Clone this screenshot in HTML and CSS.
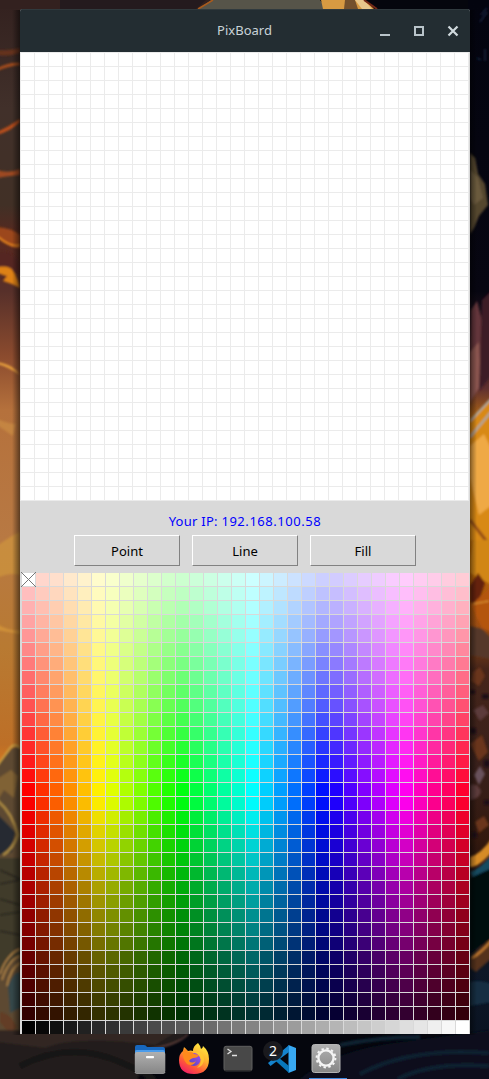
FILE: index.html
```html
<!DOCTYPE html>
<html lang="en">
<head>
<meta charset="utf-8">
<title>PixBoard</title>
<link rel="stylesheet" href="styles.css">
</head>
<body>
<div class="desktop">
  <svg class="wallpaper" viewBox="0 0 489 1079" width="489" height="1079" aria-hidden="true">
    <defs>
      <linearGradient id="left" x1="0" y1="0" x2="0" y2="1">
        <stop offset="0" stop-color="#33211f"/><stop offset=".1" stop-color="#41302a"/>
        <stop offset=".19" stop-color="#413026"/><stop offset=".22" stop-color="#58281f"/>
        <stop offset=".27" stop-color="#57302a"/><stop offset=".33" stop-color="#8b4b2e"/>
        <stop offset=".38" stop-color="#b5713c"/><stop offset=".5" stop-color="#b87943"/>
        <stop offset=".6" stop-color="#b87a32"/><stop offset=".69" stop-color="#bd6f27"/>
        <stop offset=".71" stop-color="#d57920"/><stop offset=".74" stop-color="#9c6b2f"/>
        <stop offset=".8" stop-color="#665337"/><stop offset=".87" stop-color="#393329"/>
        <stop offset=".96" stop-color="#27221e"/><stop offset="1" stop-color="#28211f"/>
      </linearGradient>
      <linearGradient id="right" x1="0" y1="0" x2="0" y2="1">
        <stop offset="0" stop-color="#03040f"/><stop offset=".27" stop-color="#070611"/>
        <stop offset=".31" stop-color="#2d1820"/><stop offset=".36" stop-color="#5f302f"/>
        <stop offset=".39" stop-color="#b86b10"/><stop offset=".47" stop-color="#e6982c"/>
        <stop offset=".51" stop-color="#bd6907"/><stop offset=".58" stop-color="#9c4d12"/>
        <stop offset=".62" stop-color="#46251a"/><stop offset=".71" stop-color="#39201b"/>
        <stop offset=".78" stop-color="#32180e"/><stop offset=".85" stop-color="#090b12"/>
        <stop offset=".9" stop-color="#0e1727"/><stop offset="1" stop-color="#07111e"/>
      </linearGradient>
      <linearGradient id="edge-l"><stop offset="0" stop-color="#000" stop-opacity="0"/><stop offset="1" stop-color="#000" stop-opacity=".5"/></linearGradient>
      <linearGradient id="edge-r"><stop offset="0" stop-color="#000" stop-opacity=".45"/><stop offset="1" stop-color="#000" stop-opacity="0"/></linearGradient>
      <filter id="soft" filterUnits="userSpaceOnUse" x="-5" y="-5" width="499" height="1089"><feGaussianBlur stdDeviation=".8"/></filter>
    </defs>
    <rect width="489" height="1079" fill="#05060d"/>
    <rect width="22" height="1079" fill="url(#left)"/>
    <rect x="468" width="21" height="1079" fill="url(#right)"/>
    <!-- top strip -->
    <path d="M0 0H211L198 9H0Z" fill="#33211f"/>
    <path d="M60 0H206L196 9H60Z" fill="#241a1e"/>
    <path d="M211 0H320L328 9H198Z" fill="#565449"/>
    <path d="M213 0l-15 9" stroke="#a95a1c" stroke-width="1.5"/>
    <path d="M321 0h44l9 9h-51z" fill="#d79a42"/>
    <path d="M345 0h10l3 9h-14z" fill="#73502c"/>
    <path d="M355 0h9l8 9h-10z" fill="#e8c78b"/>
    <path d="M364 0l13 9" stroke="#732817" stroke-width="2"/>
    <g filter="url(#soft)">
      <!-- clouds on the left -->
      <path d="M-3 50Q8 51 20 48V53Q8 57 -3 55Z" fill="#65301e"/>
      <path d="M-3 68Q10 62 20 63V65Q9 66 -3 71Z" fill="#a24c1d"/>
      <path d="M-3 132Q10 126 20 119V122Q11 131 -3 135Z" fill="#b84e1d"/>
      <path d="M-3 170Q9 174 20 169V175Q8 176 -3 178Z" fill="#9d4920"/>
      <path d="M-3 227Q12 228 20 235V248Q11 250 -3 236Z" fill="#9c471d"/>
      <path d="M-2 237Q11 248 20 245" fill="none" stroke="#e7851b" stroke-width="2"/>
      <path d="M-3 252Q10 248 20 263V272L4 282L2 275L-3 271Z" fill="#542622"/>
      <path d="M-3 267Q10 265 13 271Q18 278 20 288L12 284L3 281L7 276L-3 273Z" fill="#dd8119"/>
      <path d="M-3 364Q9 367 20 375L16 370Q9 364 -3 362Z" fill="#eba33d"/>
      <path d="M-3 419Q9 424 16 424L13 436Q7 432 -3 425Z" fill="#d39845" opacity=".5"/>
      <path d="M-3 546Q12 535 20 532V575Q10 572 -3 578Z" fill="#d49b3b" opacity=".6"/>
      <path d="M-3 624Q10 632 20 630V634L-3 630Z" fill="#e0a03c" opacity=".6"/>
      <!-- rocks on the left -->
      <path d="M-3 766L12 748L20 746V1034H-3Z" fill="#5d4a31"/>
      <path d="M-3 766L10 748Q15 742 20 748" fill="none" stroke="#c9a044" stroke-width="1.8"/>
      <path d="M-3 814Q9 825 15 832L12 852L-3 855Z" fill="#252b31"/>
      <path d="M-3 779L11 770L18 776L14 798L4 790L-3 801Z" fill="#806234"/>
      <path d="M-3 800Q13 814 18 835Q13 849 3 855" fill="none" stroke="#a98843" stroke-width="2.400"/>
      <path d="M-3 858H20V955L-3 975Z" fill="#403a2b"/>
      <path d="M0 870l20 9M0 884l20 -4M0 899l20 6M0 915l20 -3M0 931l20 4" stroke="#25251f" stroke-width="1.5"/>
      <path d="M0 974Q7 954 20 949M2 980Q8 960 20 956M7 986Q10 969 20 963" fill="none" stroke="#b08347" stroke-width="1.6"/>
      <path d="M8 986Q15 970 20 973V1008L10 1013Z" fill="#35474a"/>
      <path d="M0 1012Q10 1013 17 1027L10 1034L0 1022Z" fill="#633c27"/>
      <!-- right side -->
      <path d="M481 15l6-7M480 22l7-10M477 58l4 2M485 49v12" stroke="#18243d" stroke-width="1.5" fill="none"/>
      <path d="M470 153L475 158L478 174L485 184L488 205L479 216L474 228L470 234Z" fill="#55462f"/>
      <path d="M470 170l8 8 5 20-9 7-4-7z" fill="#6a5a3e"/>
      <path d="M471 310l6-9 5 20v39l-12 45z" fill="#63363a"/>
      <path d="M470 352l9-10 2 43-11 17z" fill="#8a5550"/>
      <path d="M482 300l10-10v85l-13 16z" fill="#3d1d26"/>
      <path d="M470 421L492 399V540H470Z" fill="#d88914"/>
      <path d="M470 421L491 399M470 437L491 412" stroke="#aaa9a0" stroke-width="2"/>
      <path d="M470 446L484 434L492 450V505L479 515L470 478Z" fill="#efa945"/>
      <path d="M470 520l21 27" stroke="#975018" stroke-width="3"/>
      <path d="M473 540H492V585L470 573V559Z" fill="#d18613"/>
      <path d="M470 586L478 573L485 583L476 609L470 601Z" fill="#652008"/>
      <path d="M471 605L492 586V632L482 628Z" fill="#b4540f"/>
      <path d="M473 604l16-3" stroke="#e5a33c"/>
      <path d="M470 626l12 3 10 10v20l-22-4z" fill="#54382a"/>
      <path d="M473 672l7-5 5 9-6 10-8-5zM470 744l12-9 6 17-9 9zM475 822l9-6 5 9-10 8z" fill="#6b361a"/>
      <path d="M474 775l6-9 5 8-6 11z" fill="#69515b"/>
      <path d="M470 785q8-2 11 6 0 7-11 9zM473 710l10-5 6 8-9 8z" fill="#5c3b3b"/>
      <path d="M470 690h5v4h-5zM482 694h7v5h-7zM470 728h6v6h-6zM484 760h6v7h-6zM472 832h5v6h-5zM484 800h6v5h-6z" fill="#1b1114"/>
      <path d="M470 857Q481 854 492 838V852Q478 868 470 867Z" fill="#d68b25"/>
      <path d="M470 872Q480 869 492 854V872L476 884Z" fill="#174b61"/>
      <path d="M470 878L492 868V938Q478 948 470 953Z" fill="#05070c"/>
      <path d="M470 957Q480 947 492 938V958L476 972L470 968Z" fill="#54331f"/>
      <path d="M472 958Q482 952 491 941" fill="none" stroke="#c47c32" stroke-width="2"/>
      <path d="M470 982Q480 979 492 984V1002L470 1006Z" fill="#122e43"/>
      <!-- bottom strip -->
      <path d="M-3 1030H188Q176 1046 157 1049Q145 1052 137 1083H-3Z" fill="#211b1a"/>
      <path d="M-3 1030H180L155 1045Q75 1035 45 1048L-3 1042Z" fill="#302522"/>
      <path d="M188 1034Q178 1045 151 1049" fill="none" stroke="#63433e" stroke-width="1.5"/>
      <path d="M20 1066Q70 1040 120 1062T145 1079" fill="none" stroke="#171517" stroke-width="6"/>
      <path d="M295 1083Q330 1050 400 1042L492 1030V1083Z" fill="#07101c"/>
      <path d="M360 1074Q410 1047 489 1053M398 1079Q430 1062 489 1066M340 1045Q380 1037 420 1037" fill="none" stroke="#0d2131" stroke-width="4"/>
    </g>
    <rect x="12" y="10" width="8" height="1025" fill="url(#edge-l)"/>
    <rect x="470" y="10" width="7" height="1025" fill="url(#edge-r)"/>
  </svg>

  <main class="window">
    <header class="titlebar">
      <h1 class="title">PixBoard</h1>
      <svg class="controls" width="80" height="12" viewBox="0 0 80 12">
        <path d="M0 9h10v2H0z" fill="#b9c4ca"/>
        <path d="M35 2h8v8h-8z" fill="none" stroke="#b9c4ca" stroke-width="2"/>
        <path d="M68.500 1.500l9 9M77.500 1.500l-9 9" stroke="#d0dade" stroke-width="2.200"/>
      </svg>
    </header>
    <div class="board"></div>
    <section class="panel">
      <p class="address">Your IP: <span class="digits">192.168.100.58</span></p>
      <div class="tools">
        <button class="tool">Point</button>
        <button class="tool">Line</button>
        <button class="tool">Fill</button>
      </div>
    </section>
    <div class="palette" id="palette"></div>
  </main>

  <nav class="dock">
    <svg class="app" width="32" height="32" viewBox="0 0 32 32">
      <defs><linearGradient id="metal" x1="0" y1="0" x2="0" y2="1"><stop offset="0" stop-color="#b0b0b0"/><stop offset="1" stop-color="#878787"/></linearGradient></defs>
      <path d="M1 11V4q0-2 2-2h7q2 0 3 2h16q2 0 2 2v5z" fill="#1767bd"/>
      <path d="M1 10V8q0-1 2-1h26q2 0 2 2v3H1z" fill="#4b9ceb"/>
      <rect x=".8" y="9" width="30.500" height="21" rx="2" fill="url(#metal)"/>
      <path d="M1 29q0 1.500 2 1.500h26q2 0 2-1.500" fill="none" stroke="#c8c8c8" stroke-width=".7"/>
      <rect x="12" y="13" width="8" height="2.200" rx=".7" fill="#fff"/>
    </svg>
    <svg class="app" width="32" height="32" viewBox="0 0 32 32">
      <defs>
        <linearGradient id="flame" x1=".8" y1="0" x2=".2" y2="1"><stop offset="0" stop-color="#fff044"/><stop offset=".4" stop-color="#ffb02e"/><stop offset=".7" stop-color="#ff5a37"/><stop offset="1" stop-color="#ef1969"/></linearGradient>
        <linearGradient id="globe" x1="1" y1="0" x2="0" y2="1"><stop offset="0" stop-color="#a54cf0"/><stop offset="1" stop-color="#4b49b5"/></linearGradient>
      </defs>
      <path d="M20 0q2 2 3 6 2-1 2-3 6 5 6 13 0 15-15 15T1 17Q1 11 5 8l1-4 4 4q3-1 5 0 0-5 5-8z" fill="url(#flame)"/>
      <circle cx="16" cy="16.500" r="6.500" fill="url(#globe)"/>
      <path d="M5 8l2-3 3 4q4-1 6 2l5 1q-1 3-6 3-3 1-4 3 3 3 7 0-3 6-9 3-5-5-4-13z" fill="#ff8a1c"/>
      <path d="M17 9q8-2 9 7 0 7-7 9 6-6 3-11-2-3-5-5z" fill="#ffca32" opacity=".8"/>
    </svg>
    <svg class="app" width="32" height="32" viewBox="0 0 32 32">
      <rect x="2" y="3.300" width="28" height="24.500" rx="2" fill="#484848" stroke="#606060"/>
      <path d="M2.500 27.800h27" stroke="#222"/>
      <path d="M5.500 6l3.500 2.500L5.500 11M10 12.500h5" fill="none" stroke="#e0e0e0" stroke-width="1.300"/>
    </svg>
    <div class="app badged">
      <svg width="32" height="32" viewBox="0 0 32 32">
        <path d="M22.500 2L30 5v22l-7.500 3z" fill="#38a8f2"/>
        <path d="M23 2L2 20l2.500 3L23 9z" fill="#1583cd"/>
        <path d="M2 11l2.500-3L23 23v7z" fill="#0877ba"/>
      </svg>
      <span class="badge">2</span>
    </div>
    <svg class="app" width="32" height="32" viewBox="0 0 32 32">
      <rect x="2" y="1.500" width="28" height="28" rx="2.500" fill="url(#metal)" stroke="#b4b4b4"/>
      <circle cx="16" cy="15" r="7.600" fill="none" stroke="#f4f4f4" stroke-width="2.400"/>
      <circle cx="16" cy="15" r="9.400" fill="none" stroke="#f4f4f4" stroke-width="2" stroke-dasharray="2.400 2.522"/>
    </svg>
    <span class="running"></span>
  </nav>
</div>
<script src="palette.js"></script>
</body>
</html>
```

FILE: styles.css
```css
* { box-sizing: border-box; }

body {
  margin: 0;
  font-family: "Noto Sans", sans-serif;
}

.desktop {
  position: relative;
  width: 489px;
  height: 1079px;
  padding: 9px 19px 0 20px;
  overflow: hidden;
}

.wallpaper {
  position: absolute;
  inset: 0;
}

.window {
  position: relative;
  width: 450px;
  height: 1025px;
  background: #d9d9d9;
  border-radius: 3px 3px 0 0;
  overflow: hidden;
}

.titlebar {
  display: grid;
  grid-template-columns: 1fr auto 1fr;
  align-items: center;
  height: 43px;
  padding: 0 10px 2px;
  background: #232d32;
  border-top: 1px solid #303a3e;
}

.title {
  grid-column: 2;
  margin: 0 1px 0 0;
  color: #c9d3d8;
  font-size: 13px;
  font-weight: 400;
  line-height: 18px;
}

.controls {
  justify-self: end;
  margin-top: 2px;
}

.board {
  width: 449px;
  height: 449px;
  background-color: #fff;
  background-image:
    linear-gradient(90deg, #ebebeb 1px, transparent 1px),
    linear-gradient(#ebebeb 1px, transparent 1px);
  background-size: 14px 14px;
}

.panel {
  height: 72px;
  padding-top: 11px;
}

.address {
  margin: 0;
  color: #00f;
  font-size: 13px;
  letter-spacing: .25px;
  line-height: 18px;
  text-align: center;
}

.digits {
  letter-spacing: .55px;
}

.tools {
  display: flex;
  justify-content: center;
  gap: 12px;
  margin-top: 5px;
}

.tool {
  width: 106px;
  height: 31px;
  padding: 0;
  background: #d9d9d9;
  border: 1px solid;
  border-color: #fff #828282 #828282 #fff;
  color: #000;
  font: 13px/18px "Noto Sans", sans-serif;
}

.palette {
  display: grid;
  grid-template-columns: repeat(32, 13px);
  grid-auto-rows: 13px;
  gap: 1px;
  padding-left: 2px;
}

.cross {
  display: block;
  width: 15px;
  height: 15px;
  margin: -1px;
}

.dock {
  position: relative;
  display: flex;
  gap: 12px;
  width: 208px;
  height: 45px;
  margin-left: 114px;
  padding-top: 9px;
}

.app {
  flex: none;
  width: 32px;
  height: 32px;
}

.badged {
  position: relative;
}

.badge {
  position: absolute;
  top: -2px;
  left: -3px;
  width: 20px;
  height: 20px;
  border-radius: 50%;
  background: rgba(28, 28, 32, .92);
  color: #fff;
  font-size: 14px;
  line-height: 20px;
  text-align: center;
}

.running {
  position: absolute;
  right: -5px;
  bottom: 0;
  width: 38px;
  height: 1px;
  background: #3f8ae0;
}
```

FILE: palette.js
```js
const COLUMNS = 32;
const HALF = 16;
const palette = document.getElementById("palette");

function hsv(h, s, v) {
  const channel = (n) => {
    const k = (n + h / 60) % 6;
    return Math.round(255 * (v - v * s * Math.max(0, Math.min(k, 4 - k, 1))));
  };
  return `rgb(${channel(5)}, ${channel(3)}, ${channel(1)})`;
}

function addCell(color) {
  const cell = document.createElement("div");
  cell.style.backgroundColor = color;
  palette.append(cell);
  return cell;
}

for (let row = 0; row < HALF * 2; row++) {
  const s = row < HALF ? 0.2 + 0.8 * row / (HALF - 1) : 1;
  const v = row < HALF ? 1 : 1 - 0.8 * (row - HALF + 0.3) / (HALF - 0.7);
  for (let col = 0; col < COLUMNS; col++) {
    addCell(hsv(col * 360 / COLUMNS, s, v));
  }
}
for (let col = 0; col < COLUMNS; col++) {
  const g = Math.round(255 * col / (COLUMNS - 1));
  addCell(`rgb(${g}, ${g}, ${g})`);
}

// The first swatch is the eraser.
const eraser = palette.firstElementChild;
eraser.style.backgroundColor = "#fff";
eraser.innerHTML =
  '<svg class="cross" viewBox="0 0 15 15" shape-rendering="crispEdges">' +
  '<path d="M0 0L15 15M15 0L0 15" stroke="#777" stroke-width="1"/></svg>';
```
